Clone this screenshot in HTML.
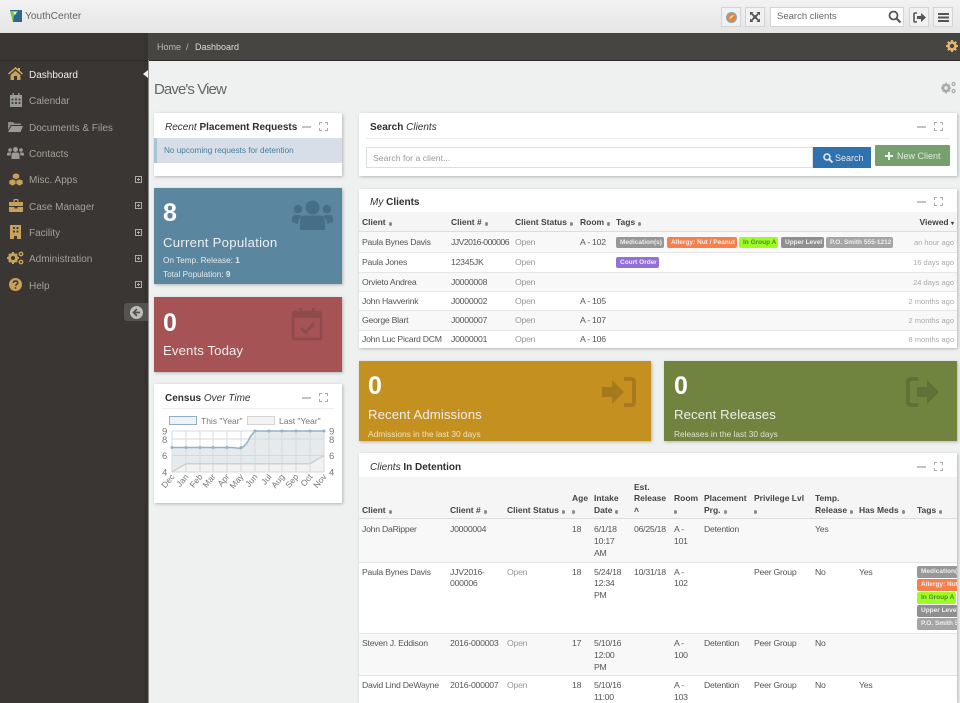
<!DOCTYPE html>
<html><head><meta charset="utf-8"><style>
html,body{margin:0;padding:0}
body{width:960px;height:703px;overflow:hidden;position:relative;background:#eff0f0;font-family:"Liberation Sans",sans-serif;font-size:8.7px;color:#555}
.b{position:absolute}
.t{position:absolute;white-space:nowrap;line-height:12px;height:12px;letter-spacing:-.25px}
.t[style*="font-size"]{letter-spacing:0}
.p{position:absolute;background:#fff;box-shadow:1px 1px 3px rgba(0,0,0,.25)}
svg{position:absolute;overflow:visible}
.n{font-size:10px;color:#a3a09c;left:29px;letter-spacing:0}
.h{font-size:10px;color:#333;letter-spacing:0}
.h b{color:#2e2e2e}
.th{font-weight:bold;font-size:8.5px;color:#444;letter-spacing:0}
.g{color:#999}
i.s{display:inline-block;width:3px;height:4px;background:#888;border-radius:50%;margin-left:3px;vertical-align:-1px}
.tag{position:absolute;height:11px;line-height:11px;border-radius:2px;color:#eee;font-weight:bold;font-size:6.5px;white-space:nowrap;overflow:hidden;padding-left:4px;box-sizing:border-box}
.v{font-size:7.5px;color:#aaa;right:6px;letter-spacing:0}
.c{color:#fff;font-weight:bold;font-size:25px;line-height:28px;height:28px;letter-spacing:0}
.l{color:#eee;font-size:13.2px;line-height:16px;height:16px;letter-spacing:.1px}
.sub{color:#e8e8e8;font-size:8.2px;letter-spacing:0}
.pl{position:absolute;width:9px;height:2px;background:#c3c3c3}
.ex{position:absolute;width:9px;height:9px;background:
linear-gradient(#aaa,#aaa) 0 0/3px 1px no-repeat,linear-gradient(#aaa,#aaa) 0 0/1px 3px no-repeat,
linear-gradient(#aaa,#aaa) 100% 0/3px 1px no-repeat,linear-gradient(#aaa,#aaa) 100% 0/1px 3px no-repeat,
linear-gradient(#aaa,#aaa) 0 100%/3px 1px no-repeat,linear-gradient(#aaa,#aaa) 0 100%/1px 3px no-repeat,
linear-gradient(#aaa,#aaa) 100% 100%/3px 1px no-repeat,linear-gradient(#aaa,#aaa) 100% 100%/1px 3px no-repeat}
.pb{position:absolute;left:135px;width:7px;height:7px;border:1px solid #aaa;box-sizing:border-box;background:
linear-gradient(#aaa,#aaa) center/3px 1px no-repeat,linear-gradient(#aaa,#aaa) center/1px 3px no-repeat}
.tb{position:absolute;top:7px;width:20px;height:20px;box-sizing:border-box;background:#f1f1f1;border:1px solid #d4d4d4}
</style></head><body>

<!-- top bar -->
<div class="b" style="left:0;top:0;width:960px;height:33px;background:linear-gradient(#f2f2f2,#e5e5e5)"></div>
<svg style="left:9px;top:9px" width="14" height="14" viewBox="0 0 14 14"><path d="M1 1h12v12H4z" fill="#2b6a8d"/><path d="M1 2h8L5 7 4 13 3 8z" fill="#7fc241"/><path d="M4 3h4L6 6z" fill="#e9f3da"/></svg>
<div class="t" style="left:25px;top:11px;font-size:10.2px;color:#666">YouthCenter</div>
<div class="tb" style="left:721px"><svg style="left:4px;top:4px" width="11" height="11" viewBox="0 0 11 11"><circle cx="5.5" cy="5.5" r="5.5" fill="#7aa6c8"/><circle cx="5.5" cy="5.5" r="4.3" fill="#e8853c"/><path d="M3 7c1-3 3-4 5-4-1 2-3 4-5 4z" fill="#f4d08a"/></svg></div>
<div class="tb" style="left:745px"><svg style="left:3px;top:3px" width="12" height="12" viewBox="0 0 12 12"><path d="M1 1h3.5L3.3 2.2 6 4.5 8.700 2.200 7.500 1H11v3.500L9.800 3.300 7.500 6l2.300 2.700L11 7.500V11H7.500l1.200-1.200L6 7.500 3.300 9.800 4.500 11H1V7.500l1.200 1.200L4.500 6 2.200 3.300 1 4.500z" fill="#555"/></svg></div>
<div class="tb" style="left:770px;width:134px;background:#fff"></div>
<div class="t" style="left:777px;top:11px;font-size:9.500px;color:#666">Search clients</div>
<svg style="left:888px;top:10px" width="14" height="14" viewBox="0 0 14 14"><circle cx="5.500" cy="5.500" r="4" fill="none" stroke="#555" stroke-width="1.800"/><path d="M8.500 8.500l4 4" stroke="#555" stroke-width="2.200"/></svg>
<div class="tb" style="left:909px"><svg style="left:3px;top:4px" width="14" height="11" viewBox="0 0 14 11"><path d="M4 1H2Q1 1 1 2v7q0 1 1 1h2" fill="none" stroke="#555" stroke-width="1.600"/><path d="M4 4h4V1l5 4.500L8 10V7H4z" fill="#555"/></svg></div>
<div class="tb" style="left:933px"><svg style="left:4px;top:5px" width="11" height="9" viewBox="0 0 11 9"><path d="M0 0h11v2H0zM0 3.500h11v2H0zM0 7h11v2H0z" fill="#555"/></svg></div>

<!-- dark bars -->
<div class="b" style="left:0;top:33px;width:148px;height:670px;background:#3a3633"></div>
<div class="b" style="left:144px;top:33px;width:4px;height:670px;background:#363330"></div>
<div class="b" style="left:148px;top:33px;width:812px;height:27px;background:#474542"></div>
<div class="b" style="left:0;top:60px;width:960px;height:1px;background:#2e2c2a"></div>
<div class="b" style="left:148px;top:60px;width:1px;height:643px;background:#8a8a8a"></div>
<div class="t" style="left:157px;top:41px;font-size:9px;color:#bbb">Home&nbsp; /</div>
<div class="t" style="left:195px;top:41px;font-size:9px;color:#ddd">Dashboard</div>
<svg style="left:946px;top:40px" width="12" height="12" viewBox="0 0 12 12"><circle cx="6" cy="6" r="3.500" fill="none" stroke="#e5b66f" stroke-width="2.600"/><path d="M6 0v2M6 10v2M0 6h2M10 6h2M1.800 1.800l1.400 1.400M8.800 8.800l1.400 1.400M1.800 10.200l1.400-1.400M8.800 3.200l1.400-1.400" stroke="#e5b66f" stroke-width="2"/></svg>

<!-- sidebar -->
<svg style="left:8px;top:67px" width="15" height="13" viewBox="0 0 15 13"><path d="M7.500 0L0 6.500l1 1 6.500-5.500L14 7.500l1-1-3-2.600V1h-2v1.200z" fill="#d3a95f"/><path d="M2.500 8l5-4.300 5 4.300v5H9V9H6v4H2.500z" fill="#c9a25a"/></svg>
<svg style="left:10px;top:93px" width="12" height="14" viewBox="0 0 12 14"><path d="M0 2h12v12H0z" fill="#9a9a98"/><path d="M2.500 0h1.500v3H2.500zM8 0h1.500v3H8z" fill="#9a9a98"/><path d="M1.500 5.500h2v2h-2zM5 5.500h2v2H5zM8.500 5.500h2v2h-2zM1.500 9h2v2h-2zM5 9h2v2H5zM8.500 9h2v2h-2z" fill="#4a4744"/></svg>
<svg style="left:8px;top:121px" width="15" height="11" viewBox="0 0 15 11"><path d="M0 1h5l1.500 1.500H13V4H3L0 9z" fill="#8d8c8a"/><path d="M3.500 5H15l-2.500 6H0z" fill="#9a9a98"/></svg>
<svg style="left:7px;top:147px" width="17" height="12" viewBox="0 0 17 12"><g fill="#9a9a98"><circle cx="8.500" cy="2.500" r="2.500"/><circle cx="3" cy="3" r="1.800"/><circle cx="14" cy="3" r="1.800"/><path d="M4.500 12V8q0-2.500 2.500-2.500h3q2.500 0 2.500 2.500v4z"/><path d="M0 8.500V7q0-1.500 2-1.500h2L3.500 8.500zM17 8.500V7q0-1.500-2-1.500h-2l.5 3z"/></g></svg>
<svg style="left:9px;top:173px" width="14" height="13" viewBox="0 0 14 13"><g fill="#c9a25a" stroke="#3a3633" stroke-width=".6"><path d="M7 0l3.500 1.500v3.500L7 6.500 3.500 5V1.500z"/><path d="M3.500 6L7 7.500V11L3.500 13 0 11V7.500z"/><path d="M10.500 6L14 7.500V11l-3.500 2L7 11V7.500z"/></g></svg>
<svg style="left:9px;top:199px" width="14" height="13" viewBox="0 0 14 13"><path d="M4.500 3V1q0-1 1-1h3q1 0 1 1v2H14v4H0V3zM5.700 1.200V3h2.600V1.200z" fill="#c9a25a"/><path d="M0 8h5.500v1.500h3V8H14v5H0z" fill="#c9a25a"/></svg>
<svg style="left:10px;top:225px" width="11" height="14" viewBox="0 0 11 14"><path d="M0 0h11v14H7v-3H4v3H0z" fill="#c9a25a"/><path d="M3 2h2v2H3zM6.500 2h2v2h-2zM3 5.500h2v2H3zM6.500 5.500h2v2h-2z" fill="#4a4032"/></svg>
<svg style="left:7px;top:251px" width="17" height="14" viewBox="0 0 17 14"><circle cx="6" cy="7" r="3.500" fill="none" stroke="#c9a25a" stroke-width="3"/><path d="M6 1v2M6 11v2M0 7h2M10 7h2M2 3l1.500 1.500M8.500 9.500L10 11M2 11l1.500-1.500M8.500 4.500L10 3" stroke="#c9a25a" stroke-width="2"/><circle cx="14" cy="3" r="1.700" fill="none" stroke="#c9a25a" stroke-width="1.400"/><circle cx="14" cy="11" r="1.700" fill="none" stroke="#c9a25a" stroke-width="1.400"/></svg>
<svg style="left:9px;top:278px" width="13" height="13" viewBox="0 0 13 13"><circle cx="6.500" cy="6.500" r="6.500" fill="#c9a25a"/><path d="M4.300 5q0-2 2.200-2t2.200 1.900q0 1-1.200 1.600-.7.400-.7 1.200" fill="none" stroke="#3a3633" stroke-width="1.500"/><path d="M5.700 9.200h1.600v1.500H5.700z" fill="#3a3633"/></svg>

<div class="t n" style="top:70px;color:#eee">Dashboard</div>
<div class="t n" style="top:96px">Calendar</div>
<div class="t n" style="top:123px">Documents &amp; Files</div>
<div class="t n" style="top:149px">Contacts</div>
<div class="t n" style="top:175px">Misc. Apps</div>
<div class="t n" style="top:202px">Case Manager</div>
<div class="t n" style="top:228px">Facility</div>
<div class="t n" style="top:254px">Administration</div>
<div class="t n" style="top:281px">Help</div>
<div class="pb" style="top:176px"></div><div class="pb" style="top:202px"></div><div class="pb" style="top:229px"></div><div class="pb" style="top:255px"></div><div class="pb" style="top:281px"></div>
<div class="b" style="left:143px;top:70px;width:0;height:0;border:4px solid transparent;border-right:5px solid #eff0f0;border-left:0"></div>
<div class="b" style="left:124px;top:303px;width:24px;height:18px;background:#55524f;border-radius:3px 0 0 3px"></div>
<svg style="left:130px;top:306px" width="13" height="13" viewBox="0 0 13 13"><circle cx="6.500" cy="6.500" r="6.500" fill="#bdbdbb"/><path d="M7 3L3.500 6.500 7 10M3.800 6.500H10" fill="none" stroke="#55524f" stroke-width="1.800"/></svg>

<!-- title -->
<div class="t" style="left:154px;top:81px;font-size:15px;line-height:18px;height:18px;color:#666;letter-spacing:-.9px">Dave's View</div>
<svg style="left:941px;top:81px" width="15" height="13" viewBox="0 0 15 13"><circle cx="5" cy="7" r="3" fill="none" stroke="#aaa" stroke-width="2.600"/><path d="M5 1.500v2M5 10.500v2M0 7h1.500M8.500 7H10M1.500 3.500l1 1M7.500 9.500l1 1M1.500 10.500l1-1M7.500 4.500l1-1" stroke="#aaa" stroke-width="1.800"/><circle cx="12.500" cy="3" r="1.500" fill="none" stroke="#aaa" stroke-width="1.200"/><circle cx="12.500" cy="10" r="1.500" fill="none" stroke="#aaa" stroke-width="1.200"/></svg>

<!-- placement -->
<div class="p" style="left:154px;top:113px;width:188px;height:63px"></div>
<div class="t h" style="left:165px;top:122px"><em>Recent</em> <b>Placement Requests</b></div>
<div class="pl" style="left:302px;top:126px"></div><div class="ex" style="left:319px;top:122px"></div>
<div class="b" style="left:154px;top:138px;width:188px;height:25px;background:#d7dee7"></div>
<div class="b" style="left:154px;top:138px;width:3px;height:25px;background:#a9c4d4"></div>
<div class="t" style="left:164px;top:145px;font-size:8.200px;color:#46809c">No upcoming requests for detention</div>

<!-- blue -->
<div class="p" style="left:154px;top:188px;width:188px;height:96px;background:#5a879f"></div>
<div class="t c" style="left:163px;top:199px">8</div>
<div class="t l" style="left:163px;top:235px;letter-spacing:.25px">Current Population</div>
<div class="t sub" style="left:163px;top:255px">On Temp. Release: <b>1</b></div>
<div class="t sub" style="left:163px;top:269px">Total Population: <b>9</b></div>
<svg style="left:292px;top:200px" width="41" height="30" viewBox="0 0 41 30"><g fill="#466f87"><circle cx="20.500" cy="7.500" r="7"/><circle cx="6" cy="9" r="4.300"/><circle cx="35" cy="9" r="4.300"/><path d="M8 30V22q0-6.500 6-6.500h13q6 0 6 6.500v8z"/><path d="M0 22v-4q0-3 3-3h5l2 2q-4 1-4 7zM41 22v-4q0-3-3-3h-5l-2 2q4 1 4 7z"/></g></svg>

<!-- red -->
<div class="p" style="left:154px;top:297px;width:188px;height:75px;background:#a55355"></div>
<div class="t c" style="left:163px;top:309px">0</div>
<div class="t l" style="left:163px;top:343px">Events Today</div>
<svg style="left:292px;top:307px" width="30" height="33" viewBox="0 0 30 33"><path d="M1 7q0-2 2-2h24q2 0 2 2v23q0 2-2 2H3q-2 0-2-2z" fill="none" stroke="#8f4a4c" stroke-width="2.500"/><path d="M2 6h26v5H2z" fill="#8f4a4c"/><path d="M7 1h3v7H7zM20 1h3v7h-3z" fill="#8f4a4c"/><path d="M9 21l4.500 4.500L22 16" fill="none" stroke="#8f4a4c" stroke-width="3"/></svg>

<!-- census -->
<div class="p" style="left:154px;top:384px;width:188px;height:119px"></div>
<div class="t h" style="left:165px;top:393px"><b>Census</b> <em>Over Time</em></div>
<div class="pl" style="left:302px;top:397px"></div><div class="ex" style="left:319px;top:393px"></div>
<div class="b" style="left:161px;top:408px;width:174px;height:1px;background:#eee"></div>
<svg style="left:150px;top:410px" width="200" height="92" viewBox="150 410 200 92">
<rect x="169.500" y="416.500" width="27" height="8" fill="#eef2f5" stroke="#8fb0c6"/>
<rect x="247.500" y="416.500" width="27" height="8" fill="#f3f3f3" stroke="#d5d5d5"/>
<text x="201" y="424" font-size="8.500" fill="#777" font-family="Liberation Sans">This "Year"</text>
<text x="279" y="424" font-size="8.500" fill="#777" font-family="Liberation Sans">Last "Year"</text>
<path d="M172 447.500H241L248 440 255 431H324V472H172z" fill="#e6eaed"/>
<path d="M172 472L186 463.700H310L324 455.500V472z" fill="#f1f2f1"/>
<g stroke="#d4d9dd" stroke-width="1" fill="none"><path d="M172 431H324M172 439H324M172 455.500H324M172 472H324"/><path d="M172 431V472M186 431V472M200 431V472M213 431V472M227 431V472M241 431V472M255 431V472M269 431V472M282 431V472M296 431V472M310 431V472M324 431V472"/></g>
<path d="M172 447.500H232L241 448.500Q247 445 250 437L255 431H324" fill="none" stroke="#93b2c8" stroke-width="1.500"/>
<path d="M172 472L186 463.700H310L324 455.500" fill="none" stroke="#d0d0d0" stroke-width="1.500"/>
<g fill="#93b2c8"><circle cx="172" cy="447.500" r="1.500"/><circle cx="186" cy="447.500" r="1.500"/><circle cx="200" cy="447.500" r="1.500"/><circle cx="213" cy="447.500" r="1.500"/><circle cx="227" cy="447.500" r="1.500"/><circle cx="241" cy="447.500" r="1.500"/><circle cx="255" cy="431" r="1.500"/><circle cx="269" cy="431" r="1.500"/><circle cx="282" cy="431" r="1.500"/><circle cx="296" cy="431" r="1.500"/><circle cx="310" cy="431" r="1.500"/><circle cx="324" cy="431" r="1.500"/></g>
<g font-size="9.500" fill="#777" font-family="Liberation Sans"><text x="162" y="434.500">9</text><text x="162" y="443">8</text><text x="162" y="459">6</text><text x="162" y="475.500">4</text><text x="329" y="434.500">9</text><text x="329" y="443">8</text><text x="329" y="459">6</text><text x="329" y="475.500">4</text></g>
<g font-size="8.500" fill="#777" font-family="Liberation Sans" text-anchor="end">
<text transform="translate(175 477) rotate(-50)">Dec</text><text transform="translate(189 477) rotate(-50)">Jan</text><text transform="translate(203 477) rotate(-50)">Feb</text><text transform="translate(216 477) rotate(-50)">Mar</text><text transform="translate(230 477) rotate(-50)">Apr</text><text transform="translate(244 477) rotate(-50)">May</text><text transform="translate(258 477) rotate(-50)">Jun</text><text transform="translate(272 477) rotate(-50)">Jul</text><text transform="translate(285 477) rotate(-50)">Aug</text><text transform="translate(299 477) rotate(-50)">Sep</text><text transform="translate(313 477) rotate(-50)">Oct</text><text transform="translate(327 477) rotate(-50)">Nov</text></g>
</svg>

<!-- search -->
<div class="p" style="left:359px;top:113px;width:598px;height:63px"></div>
<div class="t h" style="left:370px;top:122px"><b>Search</b> <em>Clients</em></div>
<div class="pl" style="left:917px;top:126px"></div><div class="ex" style="left:934px;top:122px"></div>
<div class="b" style="left:366px;top:138px;width:584px;height:1px;background:#eee"></div>
<div class="b" style="left:366px;top:147px;width:447px;height:21px;box-sizing:border-box;border:1px solid #ddd;background:#fff"></div>
<div class="t" style="left:373px;top:152px;font-size:8.700px;color:#999">Search for a client...</div>
<div class="b" style="left:813px;top:147px;width:58px;height:21px;background:#2f72ae"></div>
<svg style="left:823px;top:153px" width="10" height="10" viewBox="0 0 10 10"><circle cx="4" cy="4" r="3" fill="none" stroke="#eee" stroke-width="1.500"/><path d="M6 6l3.500 3.500" stroke="#eee" stroke-width="1.800"/></svg>
<div class="t" style="left:835px;top:152px;font-size:9px;color:#e8e8e8">Search</div>
<div class="b" style="left:875px;top:145px;width:75px;height:21px;background:#76a16f;border-radius:1px"></div>
<svg style="left:885px;top:152px" width="8" height="8" viewBox="0 0 8 8"><path d="M3 0h2v3h3v2H5v3H3V5H0V3h3z" fill="#eee"/></svg>
<div class="t" style="left:897px;top:150px;font-size:9px;color:#dfe9dc">New Client</div>

<!-- my clients -->
<div class="p" style="left:359px;top:189px;width:598px;height:159px"></div>
<div class="t h" style="left:370px;top:197px"><em>My</em> <b>Clients</b></div>
<div class="pl" style="left:917px;top:201px"></div><div class="ex" style="left:934px;top:197px"></div>
<div class="b" style="left:359px;top:212px;width:598px;height:19px;background:#f5f5f5;border-bottom:1px solid #ddd"></div>
<div class="b" style="left:359px;top:232px;width:598px;height:20px;background:#f8f8f8"></div>
<div class="b" style="left:359px;top:272px;width:598px;height:19px;background:#f8f8f8"></div>
<div class="b" style="left:359px;top:311px;width:598px;height:19px;background:#f8f8f8"></div>
<div class="b" style="left:359px;top:252px;width:598px;height:1px;background:#e6e6e6"></div>
<div class="b" style="left:359px;top:272px;width:598px;height:1px;background:#e6e6e6"></div>
<div class="b" style="left:359px;top:291px;width:598px;height:1px;background:#e6e6e6"></div>
<div class="b" style="left:359px;top:310px;width:598px;height:1px;background:#e6e6e6"></div>
<div class="b" style="left:359px;top:330px;width:598px;height:1px;background:#e6e6e6"></div>
<div class="t th" style="left:362px;top:216px">Client<i class="s"></i></div>
<div class="t th" style="left:451px;top:216px">Client #<i class="s"></i></div>
<div class="t th" style="left:515px;top:216px">Client Status<i class="s"></i></div>
<div class="t th" style="left:580px;top:216px">Room<i class="s"></i></div>
<div class="t th" style="left:616px;top:216px">Tags<i class="s"></i></div>
<div class="t th" style="right:6px;top:216px">Viewed <span style="font-size:6px">▾</span></div>

<div class="t" style="left:362px;top:236px">Paula Bynes Davis</div><div class="t" style="left:451px;top:236px;letter-spacing:-.55px">JJV2016-000006</div><div class="t g" style="left:515px;top:236px">Open</div><div class="t" style="left:580px;top:236px">A - 102</div><div class="t v" style="top:237px">an hour ago</div>
<div class="t" style="left:362px;top:256px">Paula Jones</div><div class="t" style="left:451px;top:256px">12345JK</div><div class="t g" style="left:515px;top:256px">Open</div><div class="t v" style="top:257px">16 days ago</div>
<div class="t" style="left:362px;top:276px">Orvieto Andrea</div><div class="t" style="left:451px;top:276px">J0000008</div><div class="t g" style="left:515px;top:276px">Open</div><div class="t v" style="top:277px">24 days ago</div>
<div class="t" style="left:362px;top:295px">John Havverink</div><div class="t" style="left:451px;top:295px">J0000002</div><div class="t g" style="left:515px;top:295px">Open</div><div class="t" style="left:580px;top:295px">A - 105</div><div class="t v" style="top:296px">2 months ago</div>
<div class="t" style="left:362px;top:314px">George Blart</div><div class="t" style="left:451px;top:314px">J0000007</div><div class="t g" style="left:515px;top:314px">Open</div><div class="t" style="left:580px;top:314px">A - 107</div><div class="t v" style="top:315px">2 months ago</div>
<div class="t" style="left:362px;top:333px">John Luc Picard DCM</div><div class="t" style="left:451px;top:333px">J0000001</div><div class="t g" style="left:515px;top:333px">Open</div><div class="t" style="left:580px;top:333px">A - 106</div><div class="t v" style="top:334px">8 months ago</div>

<div class="tag" style="left:616px;top:237px;width:48px;background:#979797">Medication(s)</div>
<div class="tag" style="left:667px;top:237px;width:70px;background:#f5804b">Allergy: Nut / Peanut</div>
<div class="tag" style="left:739px;top:237px;width:39px;background:#9dfb26;color:#4e8a2c">In Group A</div>
<div class="tag" style="left:781px;top:237px;width:43px;background:#8f8f8f">Upper Level</div>
<div class="tag" style="left:826px;top:237px;width:67px;background:#a5a5a5">P.O. Smith 555-1212</div>
<div class="tag" style="left:616px;top:257px;width:43px;background:#9370d8">Court Order</div>

<!-- admissions -->
<div class="p" style="left:359px;top:361px;width:292px;height:80px;background:#c4901f"></div>
<div class="t c" style="left:368px;top:372px">0</div>
<div class="t l" style="left:368px;top:407px">Recent Admissions</div>
<div class="t" style="left:368px;top:428px;font-size:8.400px;color:#f0e2c0">Admissions in the last 30 days</div>
<svg style="left:602px;top:378px" width="33" height="28" viewBox="0 0 33 28"><path d="M0 9h10V2l12 12-12 12V19H0z" fill="#a67a1c"/><path d="M22 1h7q3 0 3 3v20q0 3-3 3h-7" fill="none" stroke="#a67a1c" stroke-width="4"/></svg>

<!-- releases -->
<div class="p" style="left:664px;top:361px;width:293px;height:80px;background:#70843f"></div>
<div class="t c" style="left:674px;top:372px">0</div>
<div class="t l" style="left:674px;top:407px">Recent Releases</div>
<div class="t" style="left:674px;top:428px;font-size:8.300px;color:#dde3cc">Releases in the last 30 days</div>
<svg style="left:907px;top:378px" width="33" height="28" viewBox="0 0 33 28"><path d="M11 1H4Q1 1 1 4v20q0 3 3 3h7" fill="none" stroke="#5f7136" stroke-width="4"/><path d="M10 9h10V2l12 12-12 12V19H10z" fill="#5f7136"/></svg>

<!-- detention -->
<div class="p" style="left:359px;top:453px;width:598px;height:250px;overflow:hidden"></div>
<div class="t h" style="left:370px;top:462px"><em>Clients</em> <b>In Detention</b></div>
<div class="pl" style="left:917px;top:466px"></div><div class="ex" style="left:934px;top:462px"></div>
<div class="b" style="left:359px;top:477px;width:598px;height:42px;background:#f5f5f5;border-bottom:1px solid #ddd;box-sizing:border-box"></div>
<div class="b" style="left:359px;top:519px;width:598px;height:43px;background:#f8f8f8"></div>
<div class="b" style="left:359px;top:633px;width:598px;height:42px;background:#f8f8f8"></div>
<div class="b" style="left:359px;top:562px;width:598px;height:1px;background:#e4e4e4"></div>
<div class="b" style="left:359px;top:633px;width:598px;height:1px;background:#e4e4e4"></div>
<div class="b" style="left:359px;top:675px;width:598px;height:1px;background:#e4e4e4"></div>

<div class="t th" style="left:362px;top:504px">Client<i class="s"></i></div>
<div class="t th" style="left:450px;top:504px">Client #<i class="s"></i></div>
<div class="t th" style="left:507px;top:504px">Client Status<i class="s"></i></div>
<div class="t th" style="left:572px;top:492px">Age</div><div class="t th" style="left:569px;top:504px"><i class="s"></i></div>
<div class="t th" style="left:594px;top:492px">Intake</div><div class="t th" style="left:594px;top:504px">Date<i class="s"></i></div>
<div class="t th" style="left:634px;top:481px">Est.</div><div class="t th" style="left:634px;top:492px">Release</div><div class="t th" style="left:634px;top:504px">˄</div>
<div class="t th" style="left:674px;top:492px">Room</div><div class="t th" style="left:671px;top:504px"><i class="s"></i></div>
<div class="t th" style="left:704px;top:492px">Placement</div><div class="t th" style="left:704px;top:504px">Prg.<i class="s"></i></div>
<div class="t th" style="left:754px;top:492px">Privilege Lvl</div><div class="t th" style="left:751px;top:504px"><i class="s"></i></div>
<div class="t th" style="left:815px;top:492px">Temp.</div><div class="t th" style="left:815px;top:504px">Release<i class="s"></i></div>
<div class="t th" style="left:859px;top:504px">Has Meds<i class="s"></i></div>
<div class="t th" style="left:917px;top:504px">Tags<i class="s"></i></div>

<div class="t" style="left:362px;top:523px">John DaRipper</div><div class="t" style="left:450px;top:523px">J0000004</div><div class="t" style="left:572px;top:523px">18</div>
<div class="t" style="left:594px;top:523px">6/1/18</div><div class="t" style="left:594px;top:535px">10:17</div><div class="t" style="left:594px;top:547px">AM</div>
<div class="t" style="left:634px;top:523px">06/25/18</div><div class="t" style="left:674px;top:523px">A -</div><div class="t" style="left:674px;top:535px">101</div><div class="t" style="left:704px;top:523px">Detention</div><div class="t" style="left:815px;top:523px">Yes</div>

<div class="t" style="left:362px;top:566px">Paula Bynes Davis</div><div class="t" style="left:450px;top:566px">JJV2016-</div><div class="t" style="left:450px;top:577px">000006</div><div class="t g" style="left:507px;top:566px">Open</div><div class="t" style="left:572px;top:566px">18</div>
<div class="t" style="left:594px;top:566px">5/24/18</div><div class="t" style="left:594px;top:577px">12:34</div><div class="t" style="left:594px;top:589px">PM</div>
<div class="t" style="left:634px;top:566px">10/31/18</div><div class="t" style="left:674px;top:566px">A -</div><div class="t" style="left:674px;top:577px">102</div><div class="t" style="left:754px;top:566px">Peer Group</div><div class="t" style="left:815px;top:566px">No</div><div class="t" style="left:859px;top:566px">Yes</div>

<div class="t" style="left:362px;top:637px">Steven J. Eddison</div><div class="t" style="left:450px;top:637px">2016-000003</div><div class="t g" style="left:507px;top:637px">Open</div><div class="t" style="left:572px;top:637px">17</div>
<div class="t" style="left:594px;top:637px">5/10/16</div><div class="t" style="left:594px;top:649px">12:00</div><div class="t" style="left:594px;top:661px">PM</div>
<div class="t" style="left:674px;top:637px">A -</div><div class="t" style="left:674px;top:649px">100</div><div class="t" style="left:704px;top:637px">Detention</div><div class="t" style="left:754px;top:637px">Peer Group</div><div class="t" style="left:815px;top:637px">No</div>

<div class="t" style="left:362px;top:679px">David Lind DeWayne</div><div class="t" style="left:450px;top:679px">2016-000007</div><div class="t g" style="left:507px;top:679px">Open</div><div class="t" style="left:572px;top:679px">18</div>
<div class="t" style="left:594px;top:679px">5/10/16</div><div class="t" style="left:594px;top:691px">11:00</div>
<div class="t" style="left:674px;top:679px">A -</div><div class="t" style="left:674px;top:691px">103</div><div class="t" style="left:704px;top:679px">Detention</div><div class="t" style="left:754px;top:679px">Peer Group</div><div class="t" style="left:815px;top:679px">No</div><div class="t" style="left:859px;top:679px">Yes</div>

<div class="tag" style="left:917px;top:566px;width:40px;height:12px;background:#979797;border-radius:2px 0 0 2px">Medication(s)</div>
<div class="tag" style="left:917px;top:579px;width:40px;height:12px;background:#f5804b;border-radius:2px 0 0 2px">Allergy: Nut / Peanut</div>
<div class="tag" style="left:917px;top:592px;width:39px;height:12px;background:#9dfb26;color:#4e8a2c">In Group A</div>
<div class="tag" style="left:917px;top:605px;width:40px;height:12px;background:#8f8f8f;border-radius:2px 0 0 2px">Upper Level</div>
<div class="tag" style="left:917px;top:618px;width:40px;height:12px;background:#a5a5a5;border-radius:2px 0 0 2px">P.O. Smith 555-1212</div>

</body></html>
